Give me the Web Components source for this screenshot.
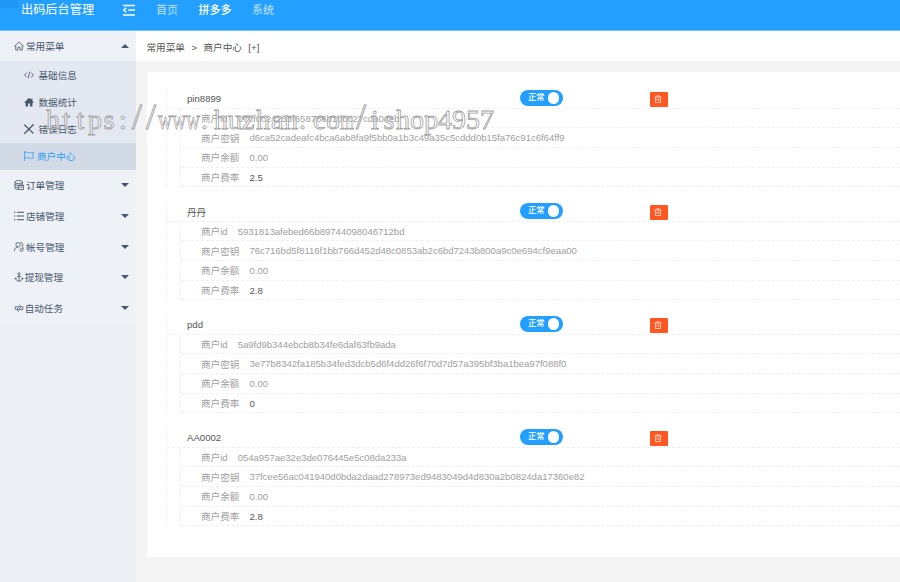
<!DOCTYPE html>
<html lang="zh-CN">
<head>
<meta charset="utf-8">
<title>出码后台管理</title>
<style>
  html, body {
    margin: 0;
    height: 100%;
    overflow: hidden;
  }
  body {
    font-family: "Liberation Sans", "Noto Sans CJK SC", sans-serif;
    font-size: 9.6px;
    color: #555;
    background: #f4f4f4;
  }
</style>
</head>
<body>
<admin-layout>
  <top-bar slot="header" brand="出码后台管理">
    <nav-link>首页</nav-link>
    <nav-link active>拼多多</nav-link>
    <nav-link>系统</nav-link>
  </top-bar>

  <menu-group slot="side" icon="home" label="常用菜单" open>
    <menu-item icon="code">基础信息</menu-item>
    <menu-item icon="house">数据统计</menu-item>
    <menu-item icon="cross">错误日志</menu-item>
    <menu-item icon="flag" active>商户中心</menu-item>
  </menu-group>
  <menu-group slot="side" icon="order" label="订单管理"></menu-group>
  <menu-group slot="side" icon="list" label="店铺管理"></menu-group>
  <menu-group slot="side" icon="users" label="帐号管理"></menu-group>
  <menu-group slot="side" icon="anchor" label="提现管理"></menu-group>
  <menu-group slot="side" icon="loop" label="自动任务"></menu-group>

  <bread-crumb slot="crumb"><span>常用菜单</span><span>&gt;</span><span>商户中心</span><span>[+]</span></bread-crumb>

  <merchant-card name="pin8899" mid="07cf0c24255f658766b1b0c27cda04eb" key="d6ca52cadeafc4bca6ab8fa9f5bb0a1b3c49a35c5cddd0b15fa76c91c6f64ff9" balance="0.00" rate="2.5"></merchant-card>
  <merchant-card name="丹丹" mid="5931813afebed66b89744098046712bd" key="76c716bd5f8116f1bb766d452d48c0853ab2c6bd7243b800a9c0e694cf9eaa00" balance="0.00" rate="2.8"></merchant-card>
  <merchant-card name="pdd" mid="5a9fd9b344ebcb8b34fe6daf63fb9ada" key="3e77b8342fa185b34fed3dcb5d6f4dd26f6f70d7d57a395bf3ba1bea97f088f0" balance="0.00" rate="0"></merchant-card>
  <merchant-card name="AA0002" mid="054a957ae32e3de076445e5c08da233a" key="37fcee56ac041940d0bda2daad278973ed9483049d4d830a2b0824da17360e82" balance="0.00" rate="2.8"></merchant-card>
</admin-layout>
<water-mark text="https://www.huzhan.com/ishop4957"></water-mark>

<script>
// 16x16 line icons
const ICONS = {
  home: '<path d="M.5 8.500 8 1.500l7.500 7M2.800 7v7.500h3.500V10h3.400v4.500h3.500V7"/>',
  code: '<path d="M4.500 4 1 8l3.500 4M11.500 4 15 8l-3.500 4M9.300 2.500 6.700 13.500"/>',
  house: '<path fill="currentColor" stroke="none" d="M8 1 0 9h2.500v6H6.500v-4.500h3V15h4V9H16l-2.500-2.600V2.500h-2v2z"/>',
  cross: '<path stroke-width="2.200" d="M.5 1 15 15M15.500.5.5 15.500"/>',
  flag: '<path d="M1 0v16M1 2.500c3-2 6 1.500 14.500 0l-2 4 2 4.500c-6 2-10-1.500-14.500 0"/>',
  order: '<ellipse cx="7.500" cy="3.200" rx="6" ry="2.500"/><path d="M1.500 3.200v9.500c0 1.500 2.500 2.500 5.500 2.500M13.500 3.200V7.500M1.500 6.500c1 2.500 10 2.800 12 0M1.500 10c1 1.500 3 2 5 2"/><rect x="7.500" y="8.500" width="8" height="6.500"/><path d="M9 11.500h5"/>',
  list: '<path stroke-width="1.700" d="M4.500 2H16M4.500 8H16M4.500 14H16M0 2h2.200M0 8h2.200M0 14h2.200"/>',
  users: '<circle cx="6.500" cy="4.500" r="3.500"/><path d="M.5 15c0-4.500 2-6.800 6-6.800M10 1c4.500-.5 5.500 4.500 2.500 6.500 2 .6 2.500 2 2.500 3.500"/><circle cx="12" cy="12.500" r="2.300"/>',
  anchor: '<circle cx="8" cy="3" r="1.800"/><path d="M8 5v10M5 7.300h6M2.500 9.500c0 3.500 2.500 5.300 5.500 5.300s5.500-1.800 5.500-5.300M1.300 11.300l1.300-2 1.700 1.500M14.700 11.300l-1.300-2-1.700 1.500"/>',
  loop: '<path d="M2 10.500V6h9M8.500 2.500 12 6 8.500 9.500M14 5.500V10.500H5M7.500 7l-3.500 3.500L7.500 14"/>',
  trash: '<path d="M1 4h14M5.500 4V1.500h5V4M3 4v11h10V4M6.300 7v5M9.700 7v5"/>',
  fold: '<path stroke-width="2" d="M0 2h16M7 8h9M0 14.500h16M4.500 5 1 8l3.500 3"/>'
};

function icon(name, size) {
  return `<svg width="${size}" height="${size}" viewBox="0 0 16 16" fill="none" stroke="currentColor" stroke-width="1.300">${ICONS[name]}</svg>`;
}

class AdminLayout extends HTMLElement {
  constructor() {
    super();
    this.attachShadow({ mode: "open" });
    this.shadowRoot.innerHTML = `
      <style>
        :host {
          display: flex;
          flex-direction: column;
          height: 100vh;
        }
        .body {
          display: flex;
          flex: 1;
          min-height: 0;
        }
        aside {
          width: 136px;
          flex: none;
          background: #ecf0f5;
        }
        main {
          flex: 1;
          min-width: 0;
          overflow: hidden;
        }
        .panel {
          box-sizing: border-box;
          height: 485.500px;
          margin: 10.500px 0 0 11px;
          padding: 17.700px 0 0 19px;
          background: #fff;
        }
      </style>
      <slot name="header"></slot>
      <div class="body">
        <aside><slot name="side"></slot></aside>
        <main>
          <slot name="crumb"></slot>
          <div class="panel"><slot></slot></div>
        </main>
      </div>
    `;
  }
}
customElements.define("admin-layout", AdminLayout);

class TopBar extends HTMLElement {
  constructor() {
    super();
    this.attachShadow({ mode: "open" });
    this.shadowRoot.innerHTML = `
      <style>
        :host {
          display: flex;
          align-items: center;
          box-sizing: border-box;
          height: 31px;
          padding: 0 0 10px 21px;
          color: #fff;
          background: linear-gradient(#1f97f3, #1f97f3) 0 0 / 18px 8px no-repeat, #229fff;
          border-bottom: 1px solid #72c0ff;
        }
        .brand {
          width: 102px;
          font-size: 12.200px;
          line-height: 20px;
          white-space: nowrap;
        }
        svg {
          display: block;
          margin-right: 21px;
        }
        nav {
          display: flex;
          gap: 20.500px;
        }
      </style>
      <div class="brand">${this.getAttribute("brand")}</div>
      ${icon("fold", 12)}
      <nav><slot></slot></nav>
    `;
  }
}
customElements.define("top-bar", TopBar);

class NavLink extends HTMLElement {
  constructor() {
    super();
    this.attachShadow({ mode: "open" });
    this.shadowRoot.innerHTML = `
      <style>
        :host {
          display: block;
          font-size: 11px;
          line-height: 20px;
          color: #c2e3ff;
        }
        :host([active]) {
          color: #fff;
          font-weight: 500;
        }
      </style>
      <slot></slot>
    `;
  }
}
customElements.define("nav-link", NavLink);

class MenuGroup extends HTMLElement {
  constructor() {
    super();
    this.attachShadow({ mode: "open" });
    this.shadowRoot.innerHTML = `
      <style>
        :host {
          display: block;
          color: #46566b;
        }
        .head {
          display: flex;
          align-items: center;
          gap: 2px;
          height: 30.650px;
          padding: 0 7px 0 14px;
          background: #eef1f6;
        }
        .head span {
          flex: 1;
        }
        :host([icon="anchor"]) .head,
        :host([icon="loop"]) .head {
          gap: .7px;
        }
        :host([open]) .head {
          height: 30.300px;
        }
        i {
          border: 4px solid transparent;
          border-top-color: #46566b;
          border-bottom-width: 0;
        }
        :host([open]) i {
          border-top-width: 0;
          border-bottom: 4px solid #46566b;
        }
        .sub {
          background: #e4e8f1;
        }
      </style>
      <div class="head">${icon(this.getAttribute("icon"), 10)}<span>${this.getAttribute("label")}</span><i></i></div>
      <div class="sub"><slot></slot></div>
    `;
  }
}
customElements.define("menu-group", MenuGroup);

class MenuItem extends HTMLElement {
  constructor() {
    super();
    this.attachShadow({ mode: "open" });
    this.shadowRoot.innerHTML = `
      <style>
        :host {
          display: flex;
          align-items: center;
          gap: 4.500px;
          height: 27.200px;
          padding-left: 24px;
        }
        :host([active]) {
          gap: 3px;
          color: #2c9dff;
          background: #d2dbe5;
        }
      </style>
      ${icon(this.getAttribute("icon"), 10)}<span><slot></slot></span>
    `;
  }
}
customElements.define("menu-item", MenuItem);

class BreadCrumb extends HTMLElement {
  constructor() {
    super();
    this.attachShadow({ mode: "open" });
    this.shadowRoot.innerHTML = `
      <style>
        :host {
          display: flex;
          align-items: center;
          gap: 6.500px;
          box-sizing: border-box;
          height: 30px;
          padding: 2.500px 0 0 10.500px;
          background: #fff;
        }
      </style>
      <slot></slot>
    `;
  }
}
customElements.define("bread-crumb", BreadCrumb);

class StatusSwitch extends HTMLElement {
  constructor() {
    super();
    this.attachShadow({ mode: "open" });
    this.shadowRoot.innerHTML = `
      <style>
        :host {
          display: flex;
          align-items: center;
          justify-content: space-between;
          box-sizing: border-box;
          width: 42.500px;
          height: 16px;
          padding: 0 3.500px 0 8px;
          border-radius: 8px;
          background: #229fff;
          color: #fff;
          font-size: 8.200px;
          font-weight: 500;
          line-height: 16px;
        }
        i {
          width: 11.500px;
          height: 11.500px;
          border-radius: 50%;
          background: #fff;
        }
      </style>
      <slot></slot><i></i>
    `;
  }
}
customElements.define("status-switch", StatusSwitch);

class MerchantCard extends HTMLElement {
  constructor() {
    super();
    this.attachShadow({ mode: "open" });
    const get = name => this.getAttribute(name);
    this.shadowRoot.innerHTML = `
      <style>
        :host {
          display: block;
          height: 98.250px;
          margin-bottom: 14.750px;
          border-left: 1px dashed #efefef;
        }
        .title, .row {
          display: flex;
          align-items: center;
          box-sizing: border-box;
          height: 19.650px;
          border-bottom: 1px dashed #efefef;
          white-space: nowrap;
        }
        .title {
          padding-left: 20px;
        }
        .name {
          width: 333px;
        }
        status-switch {
          margin-bottom: 1.500px;
        }
        button {
          display: flex;
          align-items: center;
          justify-content: center;
          width: 18.500px;
          height: 15px;
          margin: 1.500px 0 0 87px;
          padding: 0 2px 0 0;
          border: 0;
          border-radius: 1px;
          color: #fff;
          background: #ff5722;
        }
        .rows {
          margin-left: 13px;
          border-left: 1px dashed #efefef;
        }
        .row {
          gap: 10px;
          padding-left: 20px;
          color: #a0a0a0;
        }
        .hash {
          letter-spacing: -.04px;
        }
        .rate {
          color: #555;
        }
      </style>
      <div class="title">
        <span class="name">${get("name")}</span>
        <status-switch>正常</status-switch>
        <button>${icon("trash", 8)}</button>
      </div>
      <div class="rows">
        <div class="row"><span>商户id</span><span class="hash">${get("mid")}</span></div>
        <div class="row"><span>商户密钥</span><span class="hash">${get("key")}</span></div>
        <div class="row"><span>商户余额</span><span>${get("balance")}</span></div>
        <div class="row"><span>商户费率</span><span class="rate">${get("rate")}</span></div>
      </div>
    `;
  }
}
customElements.define("merchant-card", MerchantCard);

// outlined text laid over the page, every character in a cell of the same width
class WaterMark extends HTMLElement {
  constructor() {
    super();
    this.attachShadow({ mode: "open" });
    const cell = 14;
    const inset = { t: 2.5, i: 3, s: 1.5, ":": 3, "/": 2, ".": 1, c: 1, a: 1 };
    const chars = [...this.getAttribute("text")].map((c, i) => {
      let extra = "";
      if (/[wm]/.test(c)) extra = ` textLength="${cell}" lengthAdjust="spacingAndGlyphs"`;
      if (c === "/") extra = ' class="slash"';
      return `<tspan x="${i * cell + (inset[c] || 0)}"${extra}>${c}</tspan>`;
    }).join("");
    this.shadowRoot.innerHTML = `
      <style>
        :host {
          display: block;
          position: absolute;
          left: 46px;
          top: 100px;
          pointer-events: none;
        }
        svg {
          display: block;
        }
        text {
          font-family: "Liberation Serif", serif;
          font-size: 28px;
          fill: rgba(255, 255, 255, .4);
          stroke: #a0a0a0;
          stroke-width: .8px;
        }
        .slash {
          font-size: 36px;
        }
      </style>
      <svg width="450" height="40"><text y="28.500">${chars}</text></svg>
    `;
  }
}
customElements.define("water-mark", WaterMark);
</script>
</body>
</html>
